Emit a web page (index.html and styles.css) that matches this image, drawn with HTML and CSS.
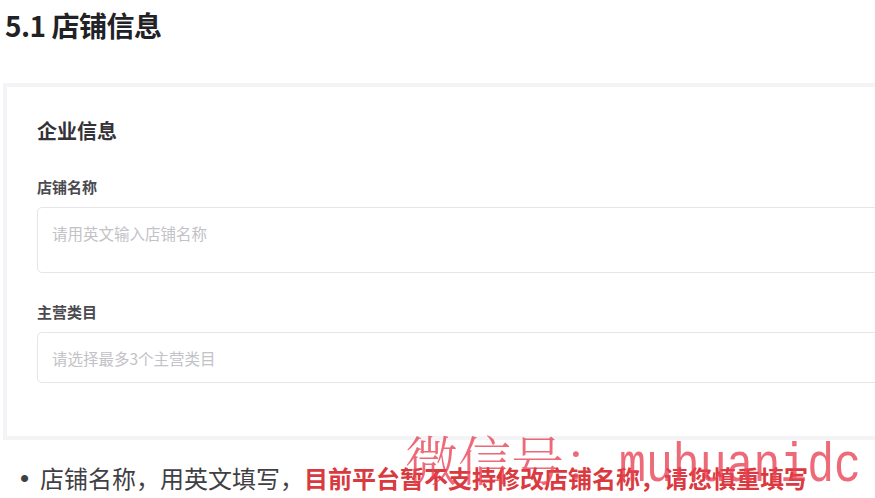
FILE: index.html
```html
<!DOCTYPE html>
<html lang="zh-CN">
<head>
<meta charset="utf-8">
<title>5.1 店铺信息</title>
<link rel="stylesheet" href="styles.css">
</head>
<body>
<div class="page">
  <h1 class="title">5.1 店铺信息</h1>
  <section class="card">
    <h2 class="card-title">企业信息</h2>
    <div class="field">
      <label class="label">店铺名称</label>
      <div class="input input-tall"><span class="placeholder">请用英文输入店铺名称</span></div>
    </div>
    <div class="field">
      <label class="label">主营类目</label>
      <div class="input input-select"><span class="placeholder">请选择最多3个主营类目</span></div>
    </div>
  </section>
  <div class="note">
    <span class="bullet">•</span>
    <span class="note-text">店铺名称，用英文填写，<strong class="warn">目前平台暂不支持修改店铺名称，请您慎重填写</strong></span>
  </div>
  <div class="watermark"><span class="wm-cjk">微信号：</span><span class="wm-latin">muhuanidc</span></div>
</div>
</body>
</html>
```

FILE: styles.css
```css
html, body {
  margin: 0;
  padding: 0;
  background: #ffffff;
  overflow: hidden;
}

body {
  width: 875px;
  height: 498px;
  font-family: "Noto Sans CJK SC", "Noto Sans", sans-serif;
}

.page {
  position: relative;
  padding-left: 3px;
  height: 498px;
}

.title {
  margin: 8px 0 0 2px;
  font-size: 28px;
  line-height: 34px;
  font-weight: 700;
  color: #222226;
  letter-spacing: -0.5px;
}

.card {
  margin-top: 41px;
  width: 920px;
  border: 4px solid #f4f4f6;
  border-right: none;
  padding: 30px 0 53px 30px;
  background: #ffffff;
  display: flex;
  flex-direction: column;
}

.card-title {
  margin: 0;
  font-size: 20px;
  line-height: 28px;
  font-weight: 700;
  color: #333338;
}

.field {
  display: flex;
  flex-direction: column;
  gap: 9px;
  margin-top: 31px;
}

.field + .field {
  margin-top: 28px;
}

.label {
  font-size: 15px;
  line-height: 22px;
  font-weight: 700;
  color: #4a4a50;
}

.input {
  border: 1.5px solid #e6e6ea;
  border-radius: 5px;
  padding-left: 14px;
  display: flex;
  box-sizing: border-box;
}

.input-tall {
  height: 66px;
  align-items: flex-start;
  padding-top: 14px;
}

.input-select {
  height: 51px;
  align-items: center;
}

.placeholder {
  font-size: 15.5px;
  line-height: 22px;
  color: #c2c2c7;
}

.note {
  display: flex;
  align-items: center;
  margin-top: 22px;
  padding-left: 17px;
  font-size: 24px;
  line-height: 32px;
  color: #3f3f44;
}

.bullet {
  flex: 0 0 20px;
  width: 20px;
  font-family: "Liberation Sans", sans-serif;
  font-size: 26px;
  line-height: 32px;
}

.warn {
  color: #d93a3f;
  font-weight: 700;
}

.watermark {
  position: absolute;
  left: 405px;
  top: 415px;
  display: flex;
  align-items: baseline;
  color: rgba(232, 64, 82, 0.78);
  pointer-events: none;
  white-space: nowrap;
}

.wm-cjk {
  font-family: "Noto Serif CJK SC", "Noto Sans CJK SC", serif;
  font-weight: 300;
  font-size: 53px;
  line-height: 70px;
}

.wm-latin {
  display: inline-block;
  font-family: "Liberation Mono", monospace;
  font-size: 56px;
  line-height: 70px;
  transform: scaleX(0.8);
  transform-origin: left center;
  margin-left: 2px;
}
```
